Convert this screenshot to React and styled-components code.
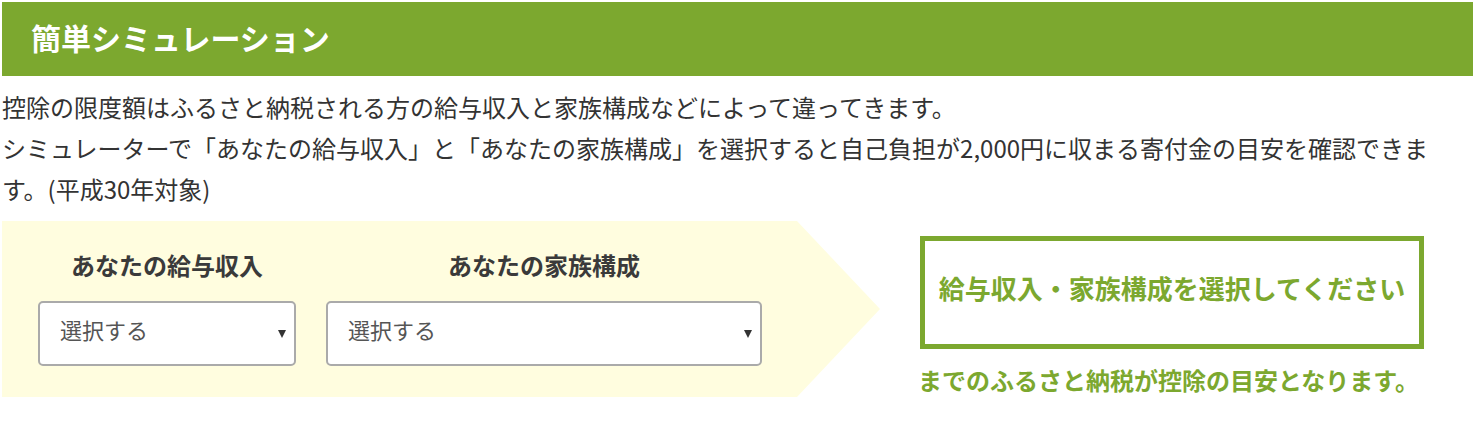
import React, { useState } from 'react';
import styled, { createGlobalStyle } from 'styled-components';

const GREEN = '#7ca82f';
const YELLOW = '#fffddf';

const GlobalStyle = createGlobalStyle`
  body {
    margin: 0;
    background: #fff;
    font-family: "Noto Sans CJK JP", "Noto Sans", sans-serif;
  }
`;

const Page = styled.div`
  padding: 2px 0 0 2px;
  color: #333;
`;

const Header = styled.h2`
  box-sizing: border-box;
  margin: 0;
  height: 74px;
  display: flex;
  align-items: center;
  padding: 0 0 5px 29px;
  background: ${GREEN};
  color: #fff;
  font-size: 30px;
  font-weight: bold;
`;

const Lead = styled.p`
  margin: 10px 0 0;
  font-size: 24px;
  line-height: 41px;
  color: #333;
`;

const SimRow = styled.div`
  display: flex;
  align-items: flex-start;
  margin-top: 12px;
`;

const InputPanel = styled.div`
  box-sizing: border-box;
  width: 878px;
  height: 176px;
  padding: 23px 0 0 36px;
  background: ${YELLOW};
  clip-path: polygon(0 0, 795px 0, 100% 50%, 795px 100%, 0 100%);
  display: flex;
  gap: 30px;
`;

const Field = styled.div`
  width: ${(p) => p.$width}px;
  display: flex;
  flex-direction: column;
`;

const FieldLabel = styled.label`
  font-size: 24px;
  line-height: 41px;
  font-weight: bold;
  color: #3a3a3a;
  text-align: center;
  margin-bottom: 16px;
`;

const SelectWrap = styled.div`
  position: relative;

  &::after {
    content: '';
    position: absolute;
    right: 10px;
    top: 50%;
    margin-top: -4px;
    border-left: 4.5px solid transparent;
    border-right: 4.5px solid transparent;
    border-top: 8px solid #333;
    pointer-events: none;
  }
`;

const Select = styled.select`
  appearance: none;
  -webkit-appearance: none;
  box-sizing: border-box;
  width: 100%;
  height: 65px;
  padding: 0 30px 9px 20px;
  border: 2px solid #aaa;
  border-radius: 5px;
  background: #fff;
  font-family: inherit;
  font-size: 22px;
  color: #555;
  outline: none;
`;

const ResultCol = styled.div`
  margin-left: 40px;
  margin-top: 15px;
  display: flex;
  flex-direction: column;
`;

const ResultBox = styled.div`
  box-sizing: border-box;
  width: 504px;
  height: 113px;
  padding-bottom: 10px;
  border: 5px solid ${GREEN};
  display: flex;
  align-items: center;
  justify-content: center;
  color: ${GREEN};
  font-size: 26px;
  font-weight: bold;
`;

const Note = styled.p`
  margin: 10px 0 0 -2px;
  font-size: 24px;
  line-height: 41px;
  font-weight: bold;
  color: ${GREEN};
`;

const incomes = [
  '選択する',
  '300万円',
  '400万円',
  '500万円',
  '600万円',
  '700万円',
  '800万円',
  '1,000万円',
];

const families = [
  '選択する',
  '独身又は共働き',
  '夫婦',
  '共働き＋子1人（高校生）',
  '夫婦＋子1人（高校生）',
  '共働き＋子2人（大学生と高校生）',
  '夫婦＋子2人（大学生と高校生）',
];

const App = () => {
  const [income, setIncome] = useState('選択する');
  const [family, setFamily] = useState('選択する');

  const result =
    income === '選択する' || family === '選択する'
      ? '給与収入・家族構成を選択してください'
      : `${income} / ${family}`;

  return (
    <Page>
      <GlobalStyle />
      <Header>簡単シミュレーション</Header>
      <Lead>
        控除の限度額はふるさと納税される方の給与収入と家族構成などによって違ってきます。
        <br />
        シミュレーターで「あなたの給与収入」と「あなたの家族構成」を選択すると自己負担が2,000円に収まる寄付金の目安を確認できます。(平成30年対象)
      </Lead>
      <SimRow>
        <InputPanel>
          <Field $width={258}>
            <FieldLabel htmlFor="income">あなたの給与収入</FieldLabel>
            <SelectWrap>
              <Select id="income" value={income} onChange={(e) => setIncome(e.target.value)}>
                {incomes.map((v) => (
                  <option key={v}>{v}</option>
                ))}
              </Select>
            </SelectWrap>
          </Field>
          <Field $width={436}>
            <FieldLabel htmlFor="family">あなたの家族構成</FieldLabel>
            <SelectWrap>
              <Select id="family" value={family} onChange={(e) => setFamily(e.target.value)}>
                {families.map((v) => (
                  <option key={v}>{v}</option>
                ))}
              </Select>
            </SelectWrap>
          </Field>
        </InputPanel>
        <ResultCol>
          <ResultBox>{result}</ResultBox>
          <Note>までのふるさと納税が控除の目安となります。</Note>
        </ResultCol>
      </SimRow>
    </Page>
  );
};

export default App;
